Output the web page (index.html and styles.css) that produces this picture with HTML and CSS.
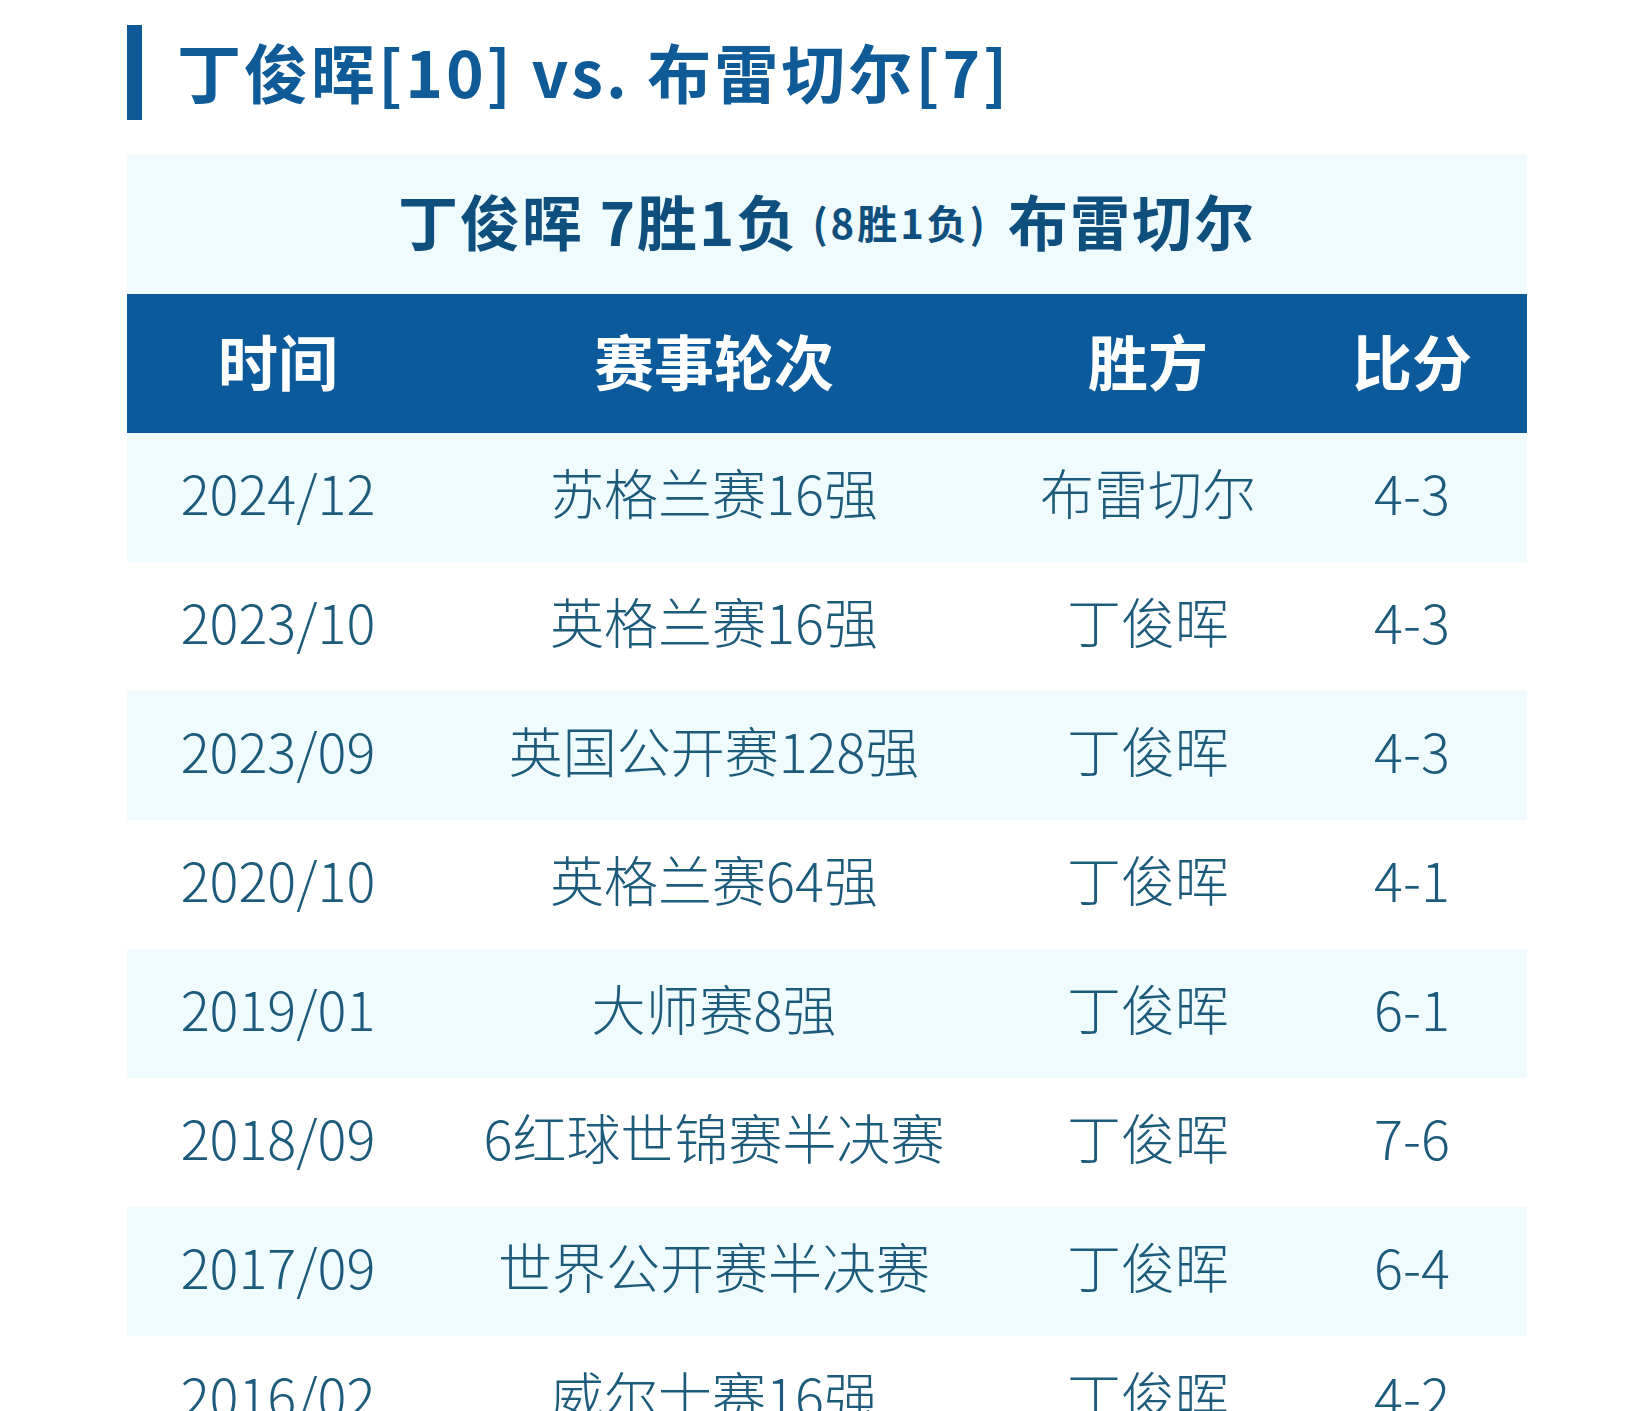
FILE: index.html
```html
<!DOCTYPE html>
<html lang="zh-CN">
<head>
<meta charset="utf-8">
<title>丁俊晖 vs. 布雷切尔</title>
<link rel="stylesheet" href="styles.css">
</head>
<body>
<div class="page">
  <h1 class="title">丁俊晖[10] vs. 布雷切尔[7]</h1>
  <section class="board">
    <div class="summary">丁俊晖 7胜1负<span class="sub">(8胜1负)</span>布雷切尔</div>
    <div class="table">
      <div class="row head"><div>时间</div><div>赛事轮次</div><div>胜方</div><div>比分</div></div>
      <div class="row tint"><div>2024/12</div><div>苏格兰赛16强</div><div>布雷切尔</div><div>4-3</div></div>
      <div class="row"><div>2023/10</div><div>英格兰赛16强</div><div>丁俊晖</div><div>4-3</div></div>
      <div class="row tint"><div>2023/09</div><div>英国公开赛128强</div><div>丁俊晖</div><div>4-3</div></div>
      <div class="row"><div>2020/10</div><div>英格兰赛64强</div><div>丁俊晖</div><div>4-1</div></div>
      <div class="row tint"><div>2019/01</div><div>大师赛8强</div><div>丁俊晖</div><div>6-1</div></div>
      <div class="row"><div>2018/09</div><div>6红球世锦赛半决赛</div><div>丁俊晖</div><div>7-6</div></div>
      <div class="row tint"><div>2017/09</div><div>世界公开赛半决赛</div><div>丁俊晖</div><div>6-4</div></div>
      <div class="row"><div>2016/02</div><div>威尔士赛16强</div><div>丁俊晖</div><div>4-2</div></div>
    </div>
  </section>
</div>
</body>
</html>
```

FILE: styles.css
```css
html, body {
  margin: 0;
  padding: 0;
  background: #ffffff;
}

body {
  font-family: "Noto Sans CJK SC", "Noto Sans", sans-serif;
  overflow: hidden;
}

.page {
  width: 1400px;
  padding: 25px 0 0 127px;
}

.title {
  display: flex;
  align-items: center;
  box-sizing: border-box;
  height: 95px;
  margin: 0;
  padding: 0 0 6px 35px;
  border-left: 15px solid #0e5a98;
  font-size: 64px;
  font-weight: 700;
  line-height: 1;
  letter-spacing: 3px;
  color: #0e5b98;
  white-space: nowrap;
}

.board {
  margin-top: 35px;
}

.summary {
  display: flex;
  align-items: center;
  justify-content: center;
  box-sizing: border-box;
  height: 139px;
  padding-bottom: 10px;
  background: #effbfd;
  font-size: 60px;
  font-weight: 700;
  line-height: 1;
  letter-spacing: 2px;
  color: #0f4f7e;
  white-space: pre;
}

.summary .sub {
  font-size: 40px;
  letter-spacing: 3px;
  margin: 4px 20px 0 14px;
}

.row {
  display: grid;
  grid-template-columns: 302px 570px 298px 230px;
  align-items: center;
  height: 129px;
  text-align: center;
  font-size: 54px;
  font-weight: 300;
  line-height: 1;
  color: #1c5b7b;
  white-space: nowrap;
}

.row > div {
  padding-bottom: 12px;
}

.row.tint {
  background: #effbfd;
}

.row.head {
  height: 139px;
  background: #0b5a9b;
  color: #ffffff;
  font-size: 60px;
  font-weight: 700;
}

.row.head > div {
  padding-bottom: 8px;
}
```
